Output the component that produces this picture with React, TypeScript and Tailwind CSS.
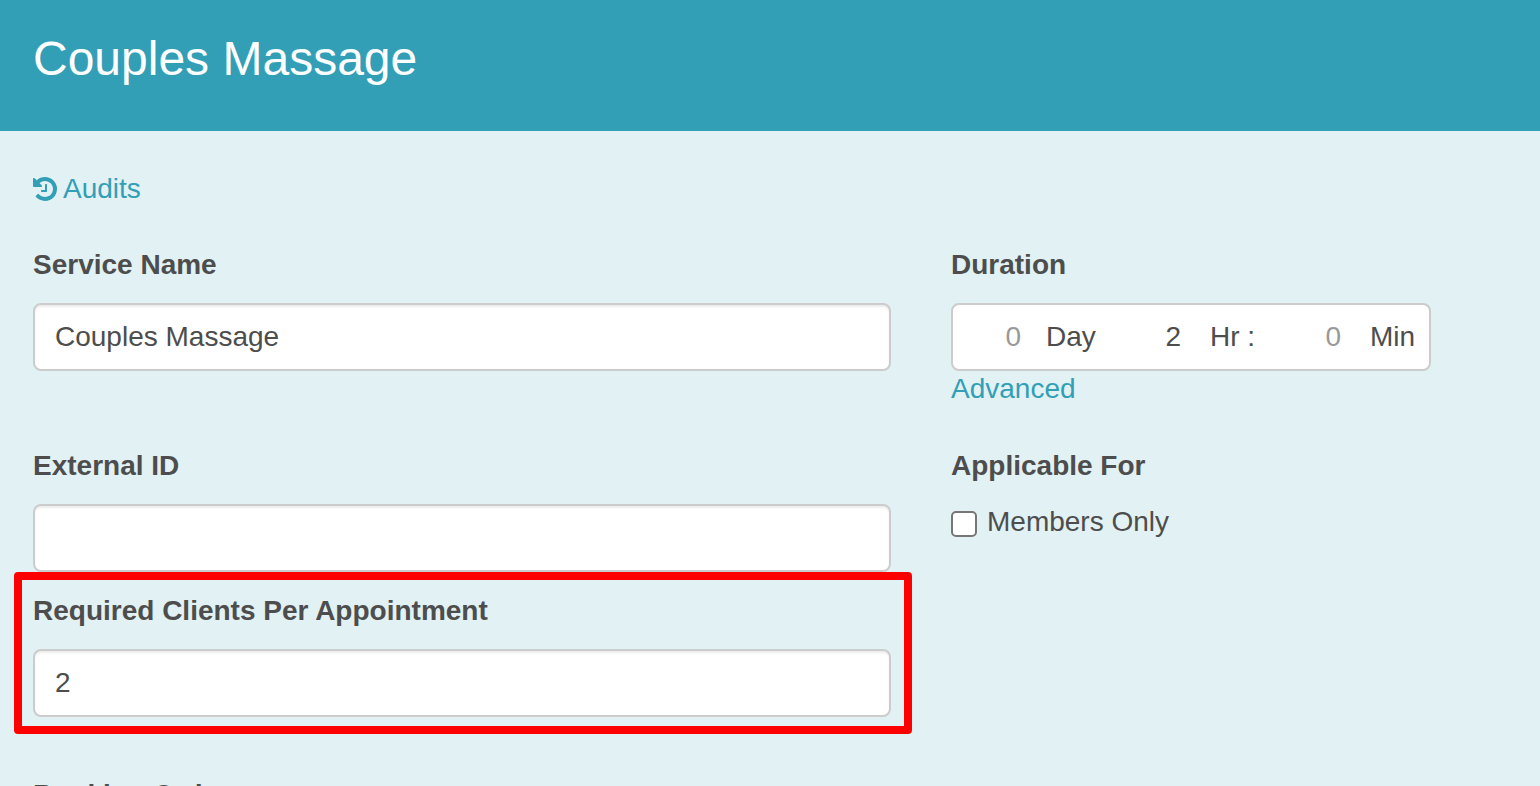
import { useState } from "react";
import type { InputHTMLAttributes, ReactNode } from "react";

function HistoryIcon() {
  return (
    <svg viewBox="0 128 1536 1536" className="size-6 shrink-0 fill-current" aria-hidden="true">
      <path d="M1536 896q0 156-61 298t-164 245-245 164-298 61q-172 0-327-72.5t-264-204.5q-7-10-6.5-22.5t8.5-20.5l137-138q10-9 25-9 16 2 23 12 73 95 179 147t225 52q104 0 198.5-40.5t163.5-109.5 109.5-163.5 40.5-198.5-40.5-198.5-109.5-163.5-163.5-109.5-198.5-40.5q-98 0-188 35.5t-160 101.5l137 138q31 30 14 69-17 40-59 40h-448q-26 0-45-19t-19-45v-448q0-42 40-59 39-17 69 14l130 129q107-101 244.5-156.5t284.5-55.5q156 0 298 61t245 164 164 245 61 298zM896 608v448q0 14-9 23t-23 9h-320q-14 0-23-9t-9-23v-64q0-14 9-23t23-9h224v-352q0-14 9-23t23-9h64q14 0 23 9t9 23z" />
    </svg>
  );
}

type FieldProps = InputHTMLAttributes<HTMLInputElement> & { id: string; label: string };

function TextField({ id, label, ...rest }: FieldProps) {
  return (
    <div className="flex flex-col gap-[18px]">
      <label htmlFor={id} className="font-bold">
        {label}
      </label>
      <input
        id={id}
        type="text"
        className="h-[68px] w-full rounded-lg border-2 border-[#ccc] bg-white px-5 shadow-[inset_0_2px_2px_rgba(0,0,0,0.075)] outline-none focus:border-[#329fb7]"
        {...rest}
      />
    </div>
  );
}

type UnitProps = { id: string; value?: string; className: string; children: ReactNode };

function DurationUnit({ id, value, className, children }: UnitProps) {
  return (
    <div className={`flex items-center ${className}`}>
      <input
        id={id}
        type="text"
        inputMode="numeric"
        placeholder="0"
        defaultValue={value}
        className="w-[68px] bg-transparent text-right outline-none placeholder:text-[#999]"
      />
      <label htmlFor={id} className="whitespace-nowrap">
        {children}
      </label>
    </div>
  );
}

export default function App() {
  const [membersOnly, setMembersOnly] = useState(false);

  return (
    <div className="h-screen overflow-hidden bg-[#e1f1f4] font-['Liberation_Sans',Arial,sans-serif] text-[28px] leading-10 text-[#4d4d4d]">
      <header className="bg-[#329fb7] px-[33px] pt-[27px] pb-10">
        <h1 className="text-5xl leading-16 text-white">Couples Massage</h1>
      </header>

      <main className="px-[33px] pt-[38px]">
        <a href="#audits" className="inline-flex items-center gap-[6px] text-[#329fb7]">
          <HistoryIcon />
          Audits
        </a>

        <form className="mt-[33px] grid grid-cols-[858fr_556fr] items-start gap-x-[60px]">
          <div className="flex flex-col">
            <TextField id="service-name" label="Service Name" defaultValue="Couples Massage" />
            <div className="mt-[75px]">
              <TextField id="external-id" label="External ID" />
            </div>
            <div className="relative mt-[19px]">
              <TextField id="required-clients" label="Required Clients Per Appointment" defaultValue="2" />
              <div className="pointer-events-none absolute -top-[19px] -right-[21px] -bottom-[17px] -left-[19px] rounded border-8 border-[#ff0000]" />
            </div>
            <div className="mt-[58px]">
              <TextField id="booking-order" label="Booking Order" />
            </div>
          </div>

          <div className="flex flex-col">
            <fieldset>
              <legend className="mb-[18px] font-bold">Duration</legend>
              <div className="flex h-[68px] w-[480px] max-w-full rounded-lg border-2 border-[#ccc] bg-white">
                <DurationUnit id="duration-days" className="w-40 gap-[25px]">
                  Day
                </DurationUnit>
                <DurationUnit id="duration-hours" value="2" className="w-40 gap-[29px]">
                  Hr :
                </DurationUnit>
                <DurationUnit id="duration-minutes" className="flex-1 gap-[29px]">
                  Min
                </DurationUnit>
              </div>
            </fieldset>
            <a href="#advanced" className="self-start leading-9 text-[#329fb7]">
              Advanced
            </a>

            <fieldset className="mt-[39px]">
              <legend className="mb-4 font-bold">Applicable For</legend>
              <label className="flex items-center gap-[10px]">
                <input
                  type="checkbox"
                  checked={membersOnly}
                  onChange={(e) => setMembersOnly(e.target.checked)}
                  className="mt-1 size-[26px] appearance-none rounded-[5px] border-2 border-[#767676] bg-white checked:bg-[#329fb7]"
                />
                Members Only
              </label>
            </fieldset>
          </div>
        </form>
      </main>
    </div>
  );
}
